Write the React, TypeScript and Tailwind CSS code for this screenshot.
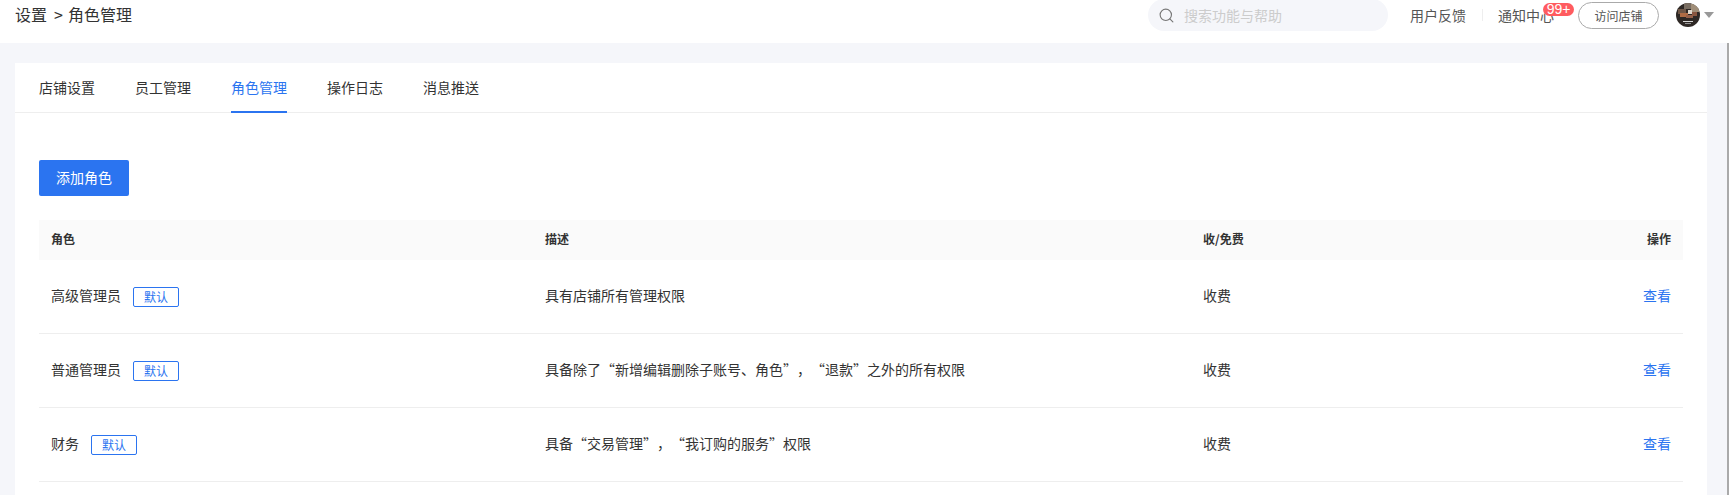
import { Search } from "lucide-react";

const tabs = ["店铺设置", "员工管理", "角色管理", "操作日志", "消息推送"];

const roles = [
  { name: "高级管理员", desc: "具有店铺所有管理权限" },
  { name: "普通管理员", desc: "具备除了“新增编辑删除子账号、角色”，“退款”之外的所有权限" },
  { name: "财务", desc: "具备“交易管理”，“我订购的服务”权限" },
];

const cols = "grid grid-cols-[494px_658px_1fr_100px] items-center";

const Avatar = () => {
  return (
    <svg width="24" height="24" viewBox="0 0 24 24" className="rounded-full">
      <defs>
        <filter id="soft">
          <feGaussianBlur stdDeviation="0.6" />
        </filter>
      </defs>
      <rect width="24" height="24" fill="#2e2825" />
      <g filter="url(#soft)">
        <rect x="8" y="0" width="7" height="6" fill="#7a6e62" />
        <rect x="15" y="1" width="9" height="8" fill="#a08e78" />
        <rect x="2" y="6" width="8" height="5" fill="#6e5646" />
        <rect x="4" y="10" width="8" height="4" fill="#b06c45" />
        <rect x="12" y="7" width="4" height="4" fill="#e2d9ce" />
        <rect x="16" y="9" width="5" height="4" fill="#8a5640" />
        <rect x="10" y="12" width="7" height="3" fill="#95604a" />
      </g>
      <rect x="7" y="18" width="10" height="1" fill="#d6d6d6" />
      <rect x="9" y="20" width="6" height="1" fill="#909090" />
    </svg>
  );
};

const Header = () => {
  return (
    <div className="h-[43px] overflow-hidden bg-white">
      <div className="flex h-[32px] -mt-px items-center pl-[15px] pr-[15px] text-[#333]">
        <div className="pb-[3px] text-[16px]">
          设置<span className="ml-[7px] mr-[5px]">&gt;</span>角色管理
        </div>
        <div className="ml-auto flex h-[32px] w-[240px] items-center rounded-full bg-[#f5f6fa] pl-[10px]">
          <Search size={17} strokeWidth={1.6} className="text-[#777]" />
          <span className="ml-[9px] text-[14px] text-[#ccc]">搜索功能与帮助</span>
        </div>
        <div className="ml-[22px] text-[14px] text-[#555]">用户反馈</div>
        <div className="ml-[16px] mr-[15px] h-[12px] w-px bg-[#eee]" />
        <div className="relative text-[14px] text-[#555]">
          通知中心
          <span className="absolute left-[45px] top-[-2px] flex h-[13px] w-[31px] items-center justify-center rounded-full bg-[#ff5b5f] font-['Liberation_Sans',sans-serif] text-[14px] leading-none text-white">
            99+
          </span>
        </div>
        <div className="ml-[24px] flex h-[27px] w-[81px] items-center justify-center rounded-full border border-[#aaa] pt-px text-[12px] text-[#555]">
          访问店铺
        </div>
        <div className="ml-[17px] flex h-[24px] items-center">
          <Avatar />
        </div>
        <div className="ml-[4px] h-0 w-0 border-x-[5px] border-t-[6px] border-x-transparent border-t-[#999]" />
      </div>
    </div>
  );
};

const RoleRow = ({ name, desc }: { name: string; desc: string }) => {
  return (
    <div className={`${cols} h-[74px] border-b border-[#eee] px-[12px] text-[14px] text-[#333]`}>
      <div className="flex items-center">
        <span className="pb-[2px]">{name}</span>
        <span className="ml-[12px] flex h-[20px] w-[46px] items-center justify-center rounded-[2px] border border-[#2b74f0] text-[12px] text-[#2b74f0]">
          默认
        </span>
      </div>
      <div className="pb-[2px]">{desc}</div>
      <div className="pb-[2px]">收费</div>
      <div className="pb-[2px] text-right text-[#2b74f0]">查看</div>
    </div>
  );
};

export default function App() {
  return (
    <div
      lang="zh-CN"
      className="h-screen overflow-hidden bg-white font-['Noto_Sans_CJK_SC',sans-serif] [text-spacing-trim:space-all]"
    >
      <Header />
      <div className="flex h-[452px]">
        <div className="flex-1 bg-[#f5f6fa] pl-[15px] pr-[20px] pt-[20px]">
          <div className="h-full bg-white">
            <div className="flex h-[50px] gap-[40px] border-b border-[#eee] pl-[24px] text-[14px] text-[#333]">
              {tabs.map((tab, i) => (
                <div
                  key={tab}
                  className={
                    i === 2
                      ? "flex h-[50px] items-center border-b-2 border-[#2b74f0] text-[#2b74f0]"
                      : "flex h-[50px] items-center border-b-2 border-transparent"
                  }
                >
                  {tab}
                </div>
              ))}
            </div>
            <div className="px-[24px] pt-[47px]">
              <div className="flex h-[36px] w-[90px] items-center justify-center rounded-[2px] bg-[#2b74f0] pb-[2px] text-[14px] text-white">
                添加角色
              </div>
              <div className={`${cols} mt-[24px] h-[40px] bg-[#fafafa] px-[12px] pb-[2px] text-[12px] font-semibold text-[#333]`}>
                <div>角色</div>
                <div>描述</div>
                <div>收/免费</div>
                <div className="text-right">操作</div>
              </div>
              {roles.map((r) => (
                <RoleRow key={r.name} name={r.name} desc={r.desc} />
              ))}
            </div>
          </div>
        </div>
        <div className="w-[2px] bg-[#aaa]" />
      </div>
    </div>
  );
}
